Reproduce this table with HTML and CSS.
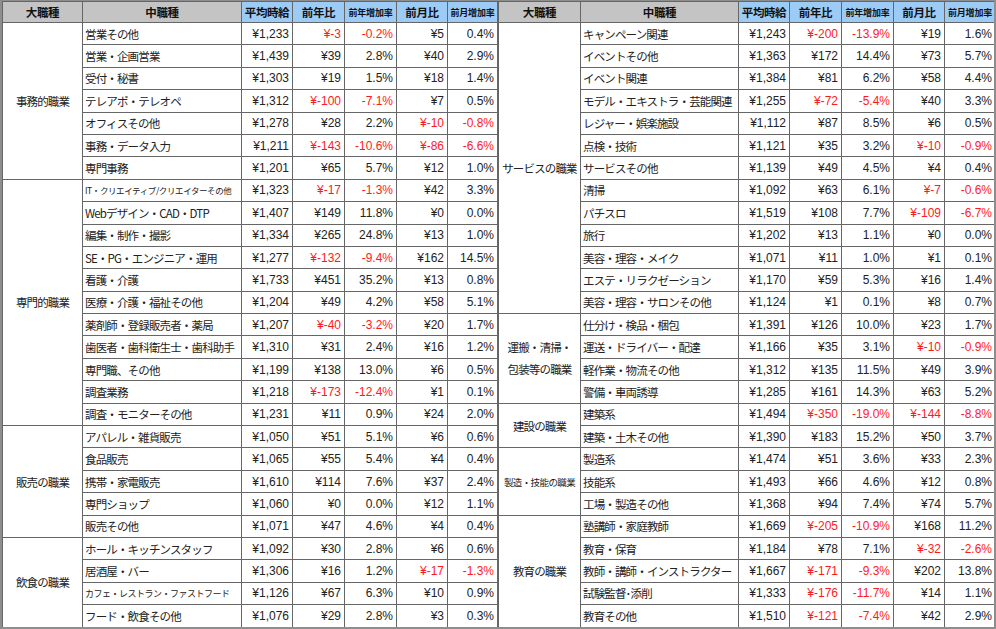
FILE: index.html
```html
<!DOCTYPE html>
<html lang="ja">
<head>
<meta charset="utf-8">
<title>職種別平均時給</title>
<link rel="stylesheet" href="styles.css">
</head>
<body>
<div class="sheet">
<table class="tbl left">
<colgroup><col class="c1"><col class="c2"><col class="c3"><col class="c4"><col class="c5"><col class="c6"><col class="c7"></colgroup>
<thead>
<tr><th class="g">大職種</th><th class="g">中職種</th><th class="b">平均時給</th><th class="b">前年比</th><th class="b sm">前年増加率</th><th class="b">前月比</th><th class="b sm">前月増加率</th></tr>
</thead>
<tbody>
<tr><td class="cat" rowspan="7">事務的職業</td><td class="nm">営業その他</td><td>¥1,233</td><td class="neg">¥-3</td><td class="neg">-0.2%</td><td>¥5</td><td>0.4%</td></tr>
<tr><td class="nm">営業・企画営業</td><td>¥1,439</td><td>¥39</td><td>2.8%</td><td>¥40</td><td>2.9%</td></tr>
<tr><td class="nm">受付・秘書</td><td>¥1,303</td><td>¥19</td><td>1.5%</td><td>¥18</td><td>1.4%</td></tr>
<tr><td class="nm">テレアポ・テレオペ</td><td>¥1,312</td><td class="neg">¥-100</td><td class="neg">-7.1%</td><td>¥7</td><td>0.5%</td></tr>
<tr><td class="nm">オフィスその他</td><td>¥1,278</td><td>¥28</td><td>2.2%</td><td class="neg">¥-10</td><td class="neg">-0.8%</td></tr>
<tr><td class="nm">事務・データ入力</td><td>¥1,211</td><td class="neg">¥-143</td><td class="neg">-10.6%</td><td class="neg">¥-86</td><td class="neg">-6.6%</td></tr>
<tr><td class="nm">専門事務</td><td>¥1,201</td><td>¥65</td><td>5.7%</td><td>¥12</td><td>1.0%</td></tr>
<tr><td class="cat" rowspan="11">専門的職業</td><td class="nm xs">IT・クリエイティブ/クリエイターその他</td><td>¥1,323</td><td class="neg">¥-17</td><td class="neg">-1.3%</td><td>¥42</td><td>3.3%</td></tr>
<tr><td class="nm">Webデザイン・CAD・DTP</td><td>¥1,407</td><td>¥149</td><td>11.8%</td><td>¥0</td><td>0.0%</td></tr>
<tr><td class="nm">編集・制作・撮影</td><td>¥1,334</td><td>¥265</td><td>24.8%</td><td>¥13</td><td>1.0%</td></tr>
<tr><td class="nm">SE・PG・エンジニア・運用</td><td>¥1,277</td><td class="neg">¥-132</td><td class="neg">-9.4%</td><td>¥162</td><td>14.5%</td></tr>
<tr><td class="nm">看護・介護</td><td>¥1,733</td><td>¥451</td><td>35.2%</td><td>¥13</td><td>0.8%</td></tr>
<tr><td class="nm">医療・介護・福祉その他</td><td>¥1,204</td><td>¥49</td><td>4.2%</td><td>¥58</td><td>5.1%</td></tr>
<tr><td class="nm">薬剤師・登録販売者・薬局</td><td>¥1,207</td><td class="neg">¥-40</td><td class="neg">-3.2%</td><td>¥20</td><td>1.7%</td></tr>
<tr><td class="nm">歯医者・歯科衛生士・歯科助手</td><td>¥1,310</td><td>¥31</td><td>2.4%</td><td>¥16</td><td>1.2%</td></tr>
<tr><td class="nm">専門職、その他</td><td>¥1,199</td><td>¥138</td><td>13.0%</td><td>¥6</td><td>0.5%</td></tr>
<tr><td class="nm">調査業務</td><td>¥1,218</td><td class="neg">¥-173</td><td class="neg">-12.4%</td><td>¥1</td><td>0.1%</td></tr>
<tr><td class="nm">調査・モニターその他</td><td>¥1,231</td><td>¥11</td><td>0.9%</td><td>¥24</td><td>2.0%</td></tr>
<tr><td class="cat" rowspan="5">販売の職業</td><td class="nm">アパレル・雑貨販売</td><td>¥1,050</td><td>¥51</td><td>5.1%</td><td>¥6</td><td>0.6%</td></tr>
<tr><td class="nm">食品販売</td><td>¥1,065</td><td>¥55</td><td>5.4%</td><td>¥4</td><td>0.4%</td></tr>
<tr><td class="nm">携帯・家電販売</td><td>¥1,610</td><td>¥114</td><td>7.6%</td><td>¥37</td><td>2.4%</td></tr>
<tr><td class="nm">専門ショップ</td><td>¥1,060</td><td>¥0</td><td>0.0%</td><td>¥12</td><td>1.1%</td></tr>
<tr><td class="nm">販売その他</td><td>¥1,071</td><td>¥47</td><td>4.6%</td><td>¥4</td><td>0.4%</td></tr>
<tr><td class="cat" rowspan="4">飲食の職業</td><td class="nm">ホール・キッチンスタッフ</td><td>¥1,092</td><td>¥30</td><td>2.8%</td><td>¥6</td><td>0.6%</td></tr>
<tr><td class="nm">居酒屋・バー</td><td>¥1,306</td><td>¥16</td><td>1.2%</td><td class="neg">¥-17</td><td class="neg">-1.3%</td></tr>
<tr><td class="nm sm2">カフェ・レストラン・ファストフード</td><td>¥1,126</td><td>¥67</td><td>6.3%</td><td>¥10</td><td>0.9%</td></tr>
<tr><td class="nm">フード・飲食その他</td><td>¥1,076</td><td>¥29</td><td>2.8%</td><td>¥3</td><td>0.3%</td></tr>
</tbody>
</table>
<table class="tbl right">
<colgroup><col class="r1"><col class="c2r"><col class="c3"><col class="c4"><col class="c5"><col class="c6"><col class="c7r"></colgroup>
<thead>
<tr><th class="g">大職種</th><th class="g">中職種</th><th class="b">平均時給</th><th class="b">前年比</th><th class="b sm">前年増加率</th><th class="b">前月比</th><th class="b sm">前月増加率</th></tr>
</thead>
<tbody>
<tr><td class="cat" rowspan="13">サービスの職業</td><td class="nm">キャンペーン関連</td><td>¥1,243</td><td class="neg">¥-200</td><td class="neg">-13.9%</td><td>¥19</td><td>1.6%</td></tr>
<tr><td class="nm">イベントその他</td><td>¥1,363</td><td>¥172</td><td>14.4%</td><td>¥73</td><td>5.7%</td></tr>
<tr><td class="nm">イベント関連</td><td>¥1,384</td><td>¥81</td><td>6.2%</td><td>¥58</td><td>4.4%</td></tr>
<tr><td class="nm">モデル・エキストラ・芸能関連</td><td>¥1,255</td><td class="neg">¥-72</td><td class="neg">-5.4%</td><td>¥40</td><td>3.3%</td></tr>
<tr><td class="nm">レジャー・娯楽施設</td><td>¥1,112</td><td>¥87</td><td>8.5%</td><td>¥6</td><td>0.5%</td></tr>
<tr><td class="nm">点検・技術</td><td>¥1,121</td><td>¥35</td><td>3.2%</td><td class="neg">¥-10</td><td class="neg">-0.9%</td></tr>
<tr><td class="nm">サービスその他</td><td>¥1,139</td><td>¥49</td><td>4.5%</td><td>¥4</td><td>0.4%</td></tr>
<tr><td class="nm">清掃</td><td>¥1,092</td><td>¥63</td><td>6.1%</td><td class="neg">¥-7</td><td class="neg">-0.6%</td></tr>
<tr><td class="nm">パチスロ</td><td>¥1,519</td><td>¥108</td><td>7.7%</td><td class="neg">¥-109</td><td class="neg">-6.7%</td></tr>
<tr><td class="nm">旅行</td><td>¥1,202</td><td>¥13</td><td>1.1%</td><td>¥0</td><td>0.0%</td></tr>
<tr><td class="nm">美容・理容・メイク</td><td>¥1,071</td><td>¥11</td><td>1.0%</td><td>¥1</td><td>0.1%</td></tr>
<tr><td class="nm">エステ・リラクゼーション</td><td>¥1,170</td><td>¥59</td><td>5.3%</td><td>¥16</td><td>1.4%</td></tr>
<tr><td class="nm">美容・理容・サロンその他</td><td>¥1,124</td><td>¥1</td><td>0.1%</td><td>¥8</td><td>0.7%</td></tr>
<tr><td class="cat" rowspan="4">運搬・清掃・<br>包装等の職業</td><td class="nm">仕分け・検品・梱包</td><td>¥1,391</td><td>¥126</td><td>10.0%</td><td>¥23</td><td>1.7%</td></tr>
<tr><td class="nm">運送・ドライバー・配達</td><td>¥1,166</td><td>¥35</td><td>3.1%</td><td class="neg">¥-10</td><td class="neg">-0.9%</td></tr>
<tr><td class="nm">軽作業・物流その他</td><td>¥1,312</td><td>¥135</td><td>11.5%</td><td>¥49</td><td>3.9%</td></tr>
<tr><td class="nm">警備・車両誘導</td><td>¥1,285</td><td>¥161</td><td>14.3%</td><td>¥63</td><td>5.2%</td></tr>
<tr><td class="cat" rowspan="2">建設の職業</td><td class="nm">建築系</td><td>¥1,494</td><td class="neg">¥-350</td><td class="neg">-19.0%</td><td class="neg">¥-144</td><td class="neg">-8.8%</td></tr>
<tr><td class="nm">建築・土木その他</td><td>¥1,390</td><td>¥183</td><td>15.2%</td><td>¥50</td><td>3.7%</td></tr>
<tr><td class="cat small" rowspan="3">製造・技能の職業</td><td class="nm">製造系</td><td>¥1,474</td><td>¥51</td><td>3.6%</td><td>¥33</td><td>2.3%</td></tr>
<tr><td class="nm">技能系</td><td>¥1,493</td><td>¥66</td><td>4.6%</td><td>¥12</td><td>0.8%</td></tr>
<tr><td class="nm">工場・製造その他</td><td>¥1,368</td><td>¥94</td><td>7.4%</td><td>¥74</td><td>5.7%</td></tr>
<tr><td class="cat" rowspan="5">教育の職業</td><td class="nm">塾講師・家庭教師</td><td>¥1,669</td><td class="neg">¥-205</td><td class="neg">-10.9%</td><td>¥168</td><td>11.2%</td></tr>
<tr><td class="nm">教育・保育</td><td>¥1,184</td><td>¥78</td><td>7.1%</td><td class="neg">¥-32</td><td class="neg">-2.6%</td></tr>
<tr><td class="nm">教師・講師・インストラクター</td><td>¥1,667</td><td class="neg">¥-171</td><td class="neg">-9.3%</td><td>¥202</td><td>13.8%</td></tr>
<tr><td class="nm">試験監督･添削</td><td>¥1,333</td><td class="neg">¥-176</td><td class="neg">-11.7%</td><td>¥14</td><td>1.1%</td></tr>
<tr><td class="nm">教育その他</td><td>¥1,510</td><td class="neg">¥-121</td><td class="neg">-7.4%</td><td>¥42</td><td>2.9%</td></tr>
</tbody>
</table>
</div>
</body>
</html>
```
FILE: styles.css
```css
html, body {
  margin: 0;
  padding: 0;
  background: #ffffff;
}
.sheet {
  display: flex;
  width: 996px;
  height: 629px;
  box-sizing: border-box;
  border: 2px solid #8e8e8e;
  border-top-width: 1px;
  background: #ffffff;
  overflow: hidden;
}
.tbl {
  border-collapse: collapse;
  table-layout: fixed;
  font-family: "Liberation Sans", "Noto Sans CJK JP", sans-serif;
  color: #222;
}
.left { width: 495px; }
.right { width: 497px; }
.c1 { width: 80px; }
.r1 { width: 82px; }
.c2 { width: 159px; }
.c2r { width: 158px; }
.c3 { width: 51px; }
.c4 { width: 52px; }
.c5 { width: 52px; }
.c6 { width: 51px; }
.c7 { width: 50px; }
.c7r { width: 51px; }
.tbl th, .tbl td {
  border: 1px solid #666666;
  padding: 0 3px 0 2px;
  white-space: nowrap;
  overflow: hidden;
  vertical-align: middle;
}
.tbl thead tr { height: 21px; }
.tbl tbody tr { height: 22.4px; }
.tbl th {
  font-family: "Noto Sans CJK JP", sans-serif;
  font-weight: 700;
  font-size: 11.5px;
  letter-spacing: -0.4px;
  text-align: center;
  color: #111;
  padding: 0;
}
.tbl th.g { background: #c4c4c4; }
.tbl th.b { background: #9cccf6; }
.tbl th.sm { font-size: 9px; letter-spacing: -0.2px; }
.tbl td {
  font-size: 12px;
  text-align: right;
}
.tbl td.nm {
  font-family: "Noto Sans CJK JP", sans-serif;
  font-size: 11.5px;
  letter-spacing: -0.85px;
  text-align: left;
  padding-left: 2px;
}
.tbl td.xs { font-size: 8.5px; letter-spacing: -0.4px; }
.tbl td.sm2 { font-size: 9px; letter-spacing: -0.5px; }
.tbl td.cat {
  font-family: "Noto Sans CJK JP", sans-serif;
  font-size: 11.5px;
  letter-spacing: -0.85px;
  text-align: center;
  padding: 0;
  line-height: 22px;
}
.tbl td.cat.small { font-size: 9.5px; letter-spacing: -0.6px; }
.tbl td.neg { color: #ff1a1a; }
```
